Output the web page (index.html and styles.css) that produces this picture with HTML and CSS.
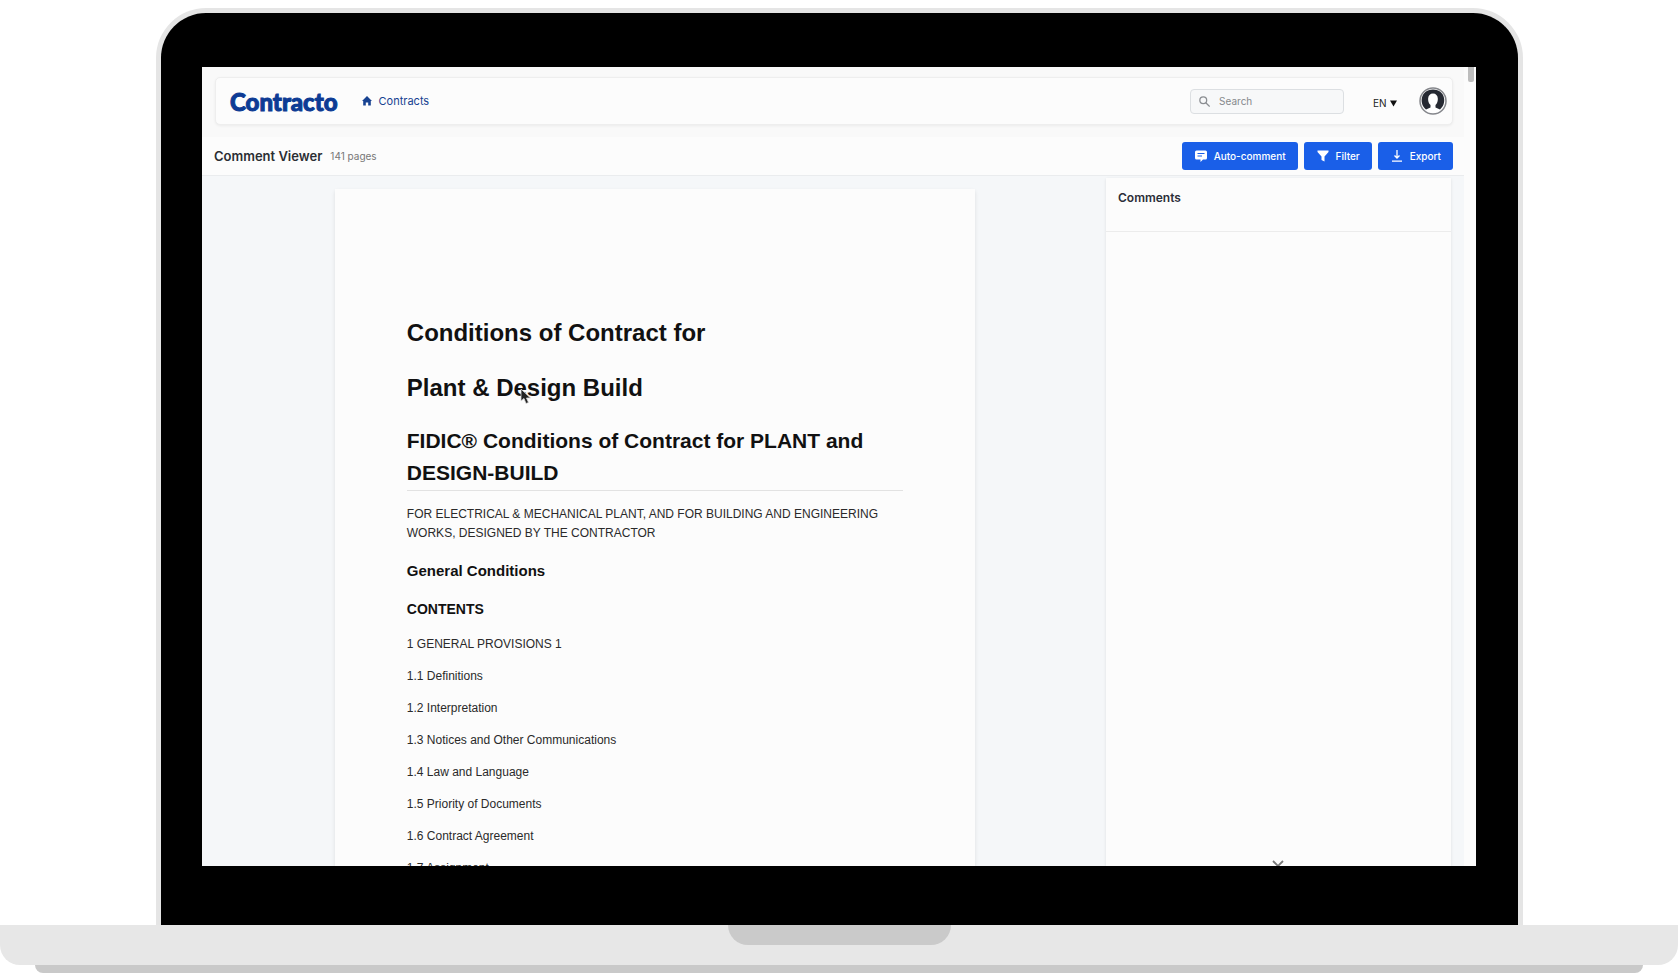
FILE: index.html
```html
<!DOCTYPE html>
<html lang="en">
<head>
  <meta charset="UTF-8">
  <title>Contracto - Comment Viewer</title>
  <link rel="stylesheet" href="styles.css">
</head>
<body>

<div class="lid">
  <div class="screen">
    <div class="app">

      <!-- Top navigation -->
      <header class="topbar">
        <nav class="nav-card">
          <a class="logo" href="#">Contracto</a>
          <a class="nav-link" href="#">
            <svg width="10" height="10" viewBox="0 0 10 10" fill="currentColor"><path d="M5 0 10 5H8.800V9.500H6.200V6.500H3.800V9.500H1.200V5H0z"/></svg>
            Contracts
          </a>
          <label class="search">
            <svg width="13" height="13" viewBox="0 0 13 13" fill="none" stroke="currentColor" stroke-width="1.500"><circle cx="5" cy="5" r="4"/><path d="M8 8l4.500 4.500"/></svg>
            <input type="search" placeholder="Search" aria-label="Search">
          </label>
          <label class="lang">
            <select aria-label="Language"><option>EN</option></select>
            <svg width="7" height="7" viewBox="0 0 8 7" fill="currentColor"><path d="M0 0h8L4 7z"/></svg>
          </label>
          <button class="avatar" aria-label="Account">
            <svg width="28" height="28" viewBox="0 0 28 28">
              <circle cx="14" cy="14" r="13" fill="#fff" stroke="#85878c" stroke-width="1.500"/>
              <path d="M7 22.500C0 17 1 3 14 2.500 27 3 28 17 21 22.500L16.500 20.500V18C20 15 20 6.500 14 6.500S8 15 11.500 18V20.500z" fill="#252932"/>
            </svg>
          </button>
        </nav>
      </header>

      <!-- Page title + actions -->
      <div class="titlebar">
        <span class="title">Comment Viewer</span>
        <span class="pages">141 pages</span>
        <div class="actions">
          <button class="btn">
            <svg width="12" height="12" viewBox="0 0 12 12"><path d="M1.500 0.500h9a1.500 1.500 0 0 1 1.500 1.500v6a1.500 1.500 0 0 1-1.500 1.500H8L5.500 12V9.500h-4A1.500 1.500 0 0 1 0 8V2A1.500 1.500 0 0 1 1.500.5z" fill="#fff"/><path d="M2.500 3.500h7M2.500 6h4.500" stroke="#1a5fe8" stroke-width="1.200"/></svg>
            Auto-comment
          </button>
          <button class="btn">
            <svg width="12" height="12" viewBox="0 0 12 12"><path d="M.5.5h11v1.500L7.500 6.500V11.500L4.500 10V6.500L.5 2z" fill="#fff"/></svg>
            Filter
          </button>
          <button class="btn">
            <svg width="12" height="12" viewBox="0 0 12 12" fill="none" stroke="#fff" stroke-width="1.300"><path d="M6 0v8M3.500 5.500l2.500 2.500 2.500-2.500M1 11.200h10"/></svg>
            Export
          </button>
        </div>
      </div>

      <main class="viewer">
        <div class="doc-pane">
          <article class="doc">
            <h1>Conditions of Contract for</h1>
            <h1>Plant &amp; Design Build</h1>
            <h2>FIDIC® Conditions of Contract for PLANT and DESIGN-BUILD</h2>
            <p>FOR ELECTRICAL &amp; MECHANICAL PLANT, AND FOR BUILDING AND ENGINEERING WORKS, DESIGNED BY THE CONTRACTOR</p>
            <h3>General Conditions</h3>
            <h4>CONTENTS</h4>
            <p>1 GENERAL PROVISIONS 1</p>
            <p>1.1 Definitions</p>
            <p>1.2 Interpretation</p>
            <p>1.3 Notices and Other Communications</p>
            <p>1.4 Law and Language</p>
            <p>1.5 Priority of Documents</p>
            <p>1.6 Contract Agreement</p>
            <p>1.7 Assignment</p>
          </article>
        </div>
        <aside class="comments">
          <div class="comments-head">Comments</div>
        </aside>
      </main>
    </div>

    <div class="scrollbar"><div class="thumb"></div></div>

    <svg class="cursor" width="12" height="17" viewBox="0 0 12 17"><path d="M1 1v12l3-2.500 2 5 2.500-1-2-4.500h4z" fill="#222" stroke="#ddd" stroke-width=".8"/></svg>
    <svg class="close" width="12" height="12" viewBox="0 0 12 12" fill="none" stroke="#777" stroke-width="1.800"><path d="M1 1l10 10M11 1L1 11"/></svg>
  </div>
</div>

<!-- Laptop base -->
<div class="base"><div class="notch"></div></div>
<div class="foot"></div>

</body>
</html>
```

FILE: styles.css
```css
* {
  box-sizing: border-box;
}
body {
  margin: 0;
  padding: 8px 0 6px;
  height: 100vh;
  display: flex;
  flex-direction: column;
  background: #fff;
  font-family: Inter, "Liberation Sans", sans-serif;
  overflow: hidden;
}
button, input, select {
  font-family: inherit;
}

/* laptop */
.lid {
  flex: 1;
  min-height: 0;
  display: flex;
  margin: 0 155px 0 156px;
  padding: 54px 42px 59px 41px;
  background: #000;
  border: 5px solid #e5e5e5;
  border-bottom: 0;
  border-radius: 50px 50px 0 0;
}
.screen {
  flex: 1;
  display: flex;
  position: relative;
  overflow: hidden;
  background: #fcfcfc;
}
.base {
  height: 40px;
  background: #e7e7e7;
  border-radius: 0 0 20px 20px;
}
.notch {
  width: 223px;
  height: 20px;
  margin: 0 auto;
  background: #cacaca;
  border-radius: 0 0 20px 20px;
}
.foot {
  height: 8px;
  margin: 0 35px;
  background: #c9c9c9;
  border-radius: 0 0 8px 8px;
}

/* app */
.app {
  flex: 1;
  display: flex;
  flex-direction: column;
  background: #f5f7f9;
}
.scrollbar {
  width: 12px;
  padding-left: 4px;
}
.thumb {
  width: 6px;
  height: 15px;
  background: #bdbdbd;
  border-radius: 0 0 2px 2px;
}
.topbar {
  padding: 10px 11px 12px 13px;
  background: #f9f9f9;
}
.nav-card {
  display: flex;
  align-items: center;
  height: 48px;
  padding: 0 5px 0 14px;
  background: #fcfcfc;
  border: 1px solid #eee;
  border-radius: 5px;
  box-shadow: 0 1px 3px rgba(0, 0, 0, 0.06);
}
.logo {
  padding-top: 2px;
  color: #0d3b94;
  font-family: Lato, sans-serif;
  font-size: 24px;
  font-weight: 900;
  line-height: 28px;
  text-decoration: none;
  -webkit-text-stroke: 1px #0d3b94;
}
.nav-link {
  display: flex;
  align-items: center;
  gap: 7px;
  margin-left: 24px;
  color: #174291;
  font-size: 11px;
  text-decoration: none;
}
.search {
  display: flex;
  align-items: center;
  gap: 9px;
  width: 154px;
  height: 25px;
  margin-left: auto;
  padding: 0 8px;
  color: #8a8d91;
  background: #f7f8f9;
  border: 1px solid #dcdfe2;
  border-radius: 4px;
}
.search input {
  width: 100%;
  min-width: 0;
  padding: 0;
  border: 0;
  background: none;
  font-size: 10px;
}
.search input::placeholder {
  color: #85888c;
}
.lang {
  display: flex;
  align-items: center;
  gap: 3px;
  margin: 4px 22px 0 29px;
  color: #111;
}
.lang select {
  appearance: none;
  padding: 0;
  border: 0;
  background: none;
  color: #222;
  font-size: 10px;
}
.avatar {
  display: flex;
  padding: 0;
  border: 0;
  background: none;
}
.titlebar {
  display: flex;
  align-items: center;
  height: 39px;
  padding: 0 11px 0 12px;
  background: #fcfcfc;
  border-bottom: 1px solid #eaecee;
}
.title {
  color: #2b2e33;
  font-size: 13px;
  font-weight: 600;
}
.pages {
  margin-left: 8px;
  color: #777;
  font-size: 10px;
}
.actions {
  display: flex;
  gap: 6px;
  margin-left: auto;
}
.btn {
  display: flex;
  align-items: center;
  gap: 7px;
  height: 28px;
  padding: 0 12px 0 13px;
  border: 0;
  border-radius: 3px;
  background: #1a5fe8;
  color: #fff;
  font-size: 10px;
  font-weight: 500;
}

/* document + comments */
.viewer {
  flex: 1;
  min-height: 0;
  display: flex;
}
.doc-pane {
  flex: 1;
  padding: 13px 0 0 2px;
}
.doc {
  width: 71%;
  height: 100%;
  margin: 0 auto;
  padding: 126px 72px 0;
  background: #fcfcfc;
  box-shadow: 0 2px 4px rgba(0, 0, 0, 0.1);
  color: #111;
  font-family: "Liberation Sans", Arial, sans-serif;
}
.doc h1 {
  margin: 0 0 19px;
  font-size: 24px;
  line-height: 36px;
}
.doc h2 {
  margin: 0 0 14px;
  padding-bottom: 1px;
  border-bottom: 1px solid #e2e2e2;
  font-size: 21px;
  line-height: 32px;
}
.doc h3 {
  margin: 17px 0;
  font-size: 15px;
  line-height: 22px;
}
.doc h4 {
  margin: 0 0 16px;
  font-size: 14px;
  line-height: 20px;
}
.doc p {
  margin: 0 0 13px;
  color: #2a2a2a;
  font-size: 12px;
  line-height: 19px;
}
.comments {
  width: 345px;
  margin: 2px 13px 0 0;
  background: #fcfcfc;
  box-shadow: 0 1px 3px rgba(0, 0, 0, 0.1);
}
.comments-head {
  height: 54px;
  padding: 12px;
  border-bottom: 1px solid #ececec;
  color: #2b2e38;
  font-size: 12px;
  font-weight: 600;
  line-height: 16px;
}

/* things floating over the page */
.cursor {
  position: absolute;
  left: 318px;
  top: 321px;
}
.close {
  position: absolute;
  right: 192px;
  bottom: -6px;
}
```
